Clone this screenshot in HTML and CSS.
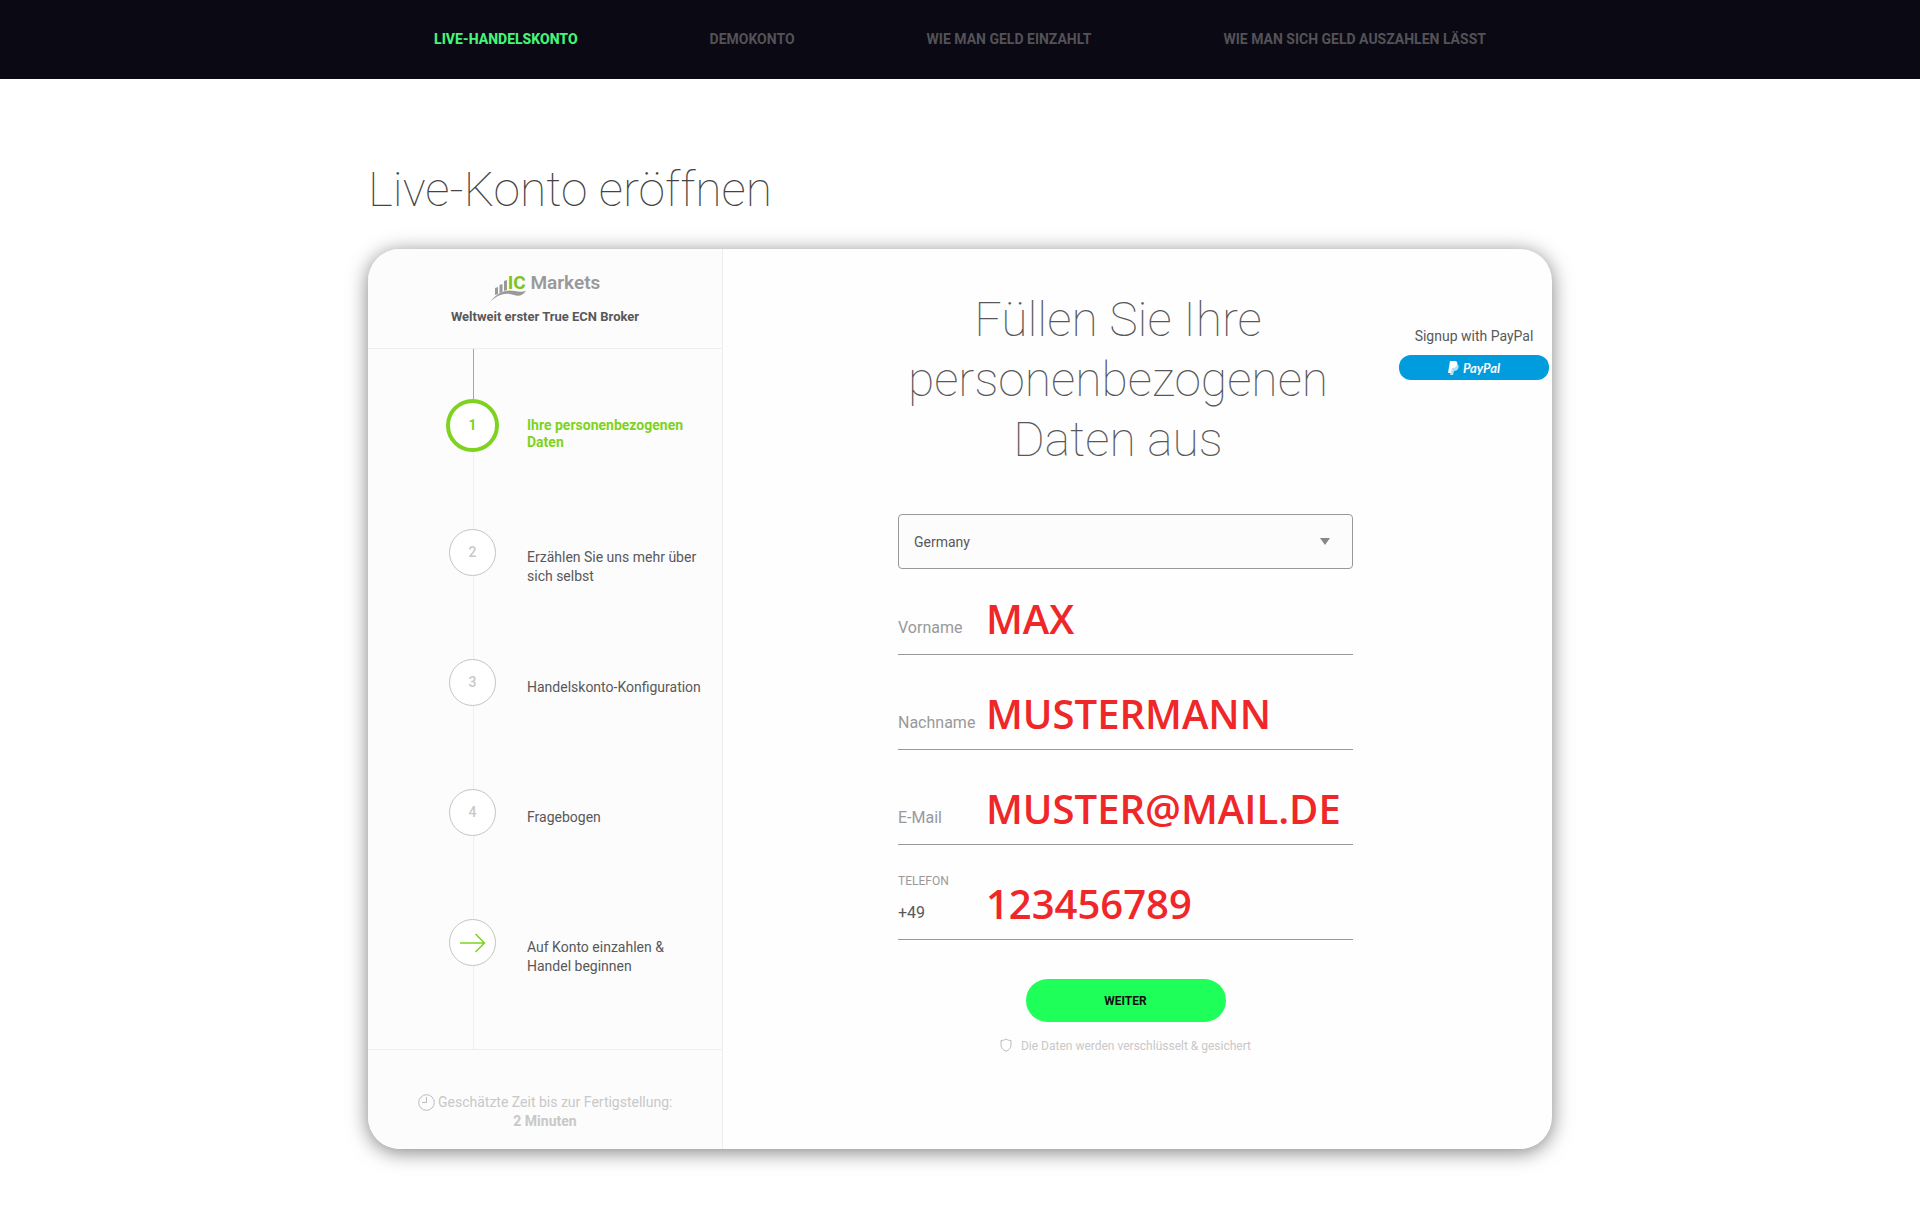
FILE: index.html
```html
<!DOCTYPE html>
<html lang="de">
<head>
    <meta charset="UTF-8">
    <meta name="viewport" content="width=device-width, initial-scale=1">
    <title>Live-Konto eröffnen</title>
    <link rel="stylesheet" href="styles.css">
</head>
<body>
    <nav class="top-nav">
        <a href="#" class="active">Live-Handelskonto</a>
        <a href="#">Demokonto</a>
        <a href="#">Wie man Geld einzahlt</a>
        <a href="#">Wie man sich Geld auszahlen lässt</a>
    </nav>

    <main class="page">
        <h1>Live-Konto eröffnen</h1>

        <div class="card">
            <aside class="sidebar">
                <div class="brand">
                    <div class="logo">
                        <svg class="logo-mark" width="38" height="30" viewBox="0 0 38 30" aria-hidden="true">
                            <path fill="#999" d="M5 15l3-1v7l-3 1zM9.500 12l3-1v8l-3 1zM14 8l3-1v10l-3 1z"/>
                            <path fill="#999" d="M0 29C7 19 17 16 25 18c4 1 7 1 11 0-3 4-7 6-12 4-8-3-16-1-24 7z"/>
                        </svg>
                        <span class="logo-text"><b>IC</b> Markets</span>
                    </div>
                    <p>Weltweit erster True ECN Broker</p>
                </div>

                <ol class="steps">
                    <li class="current"><span class="dot">1</span><span class="step-text">Ihre personenbezogenen Daten</span></li>
                    <li><span class="dot">2</span><span class="step-text">Erzählen Sie uns mehr über sich selbst</span></li>
                    <li><span class="dot">3</span><span class="step-text">Handelskonto-Konfiguration</span></li>
                    <li><span class="dot">4</span><span class="step-text">Fragebogen</span></li>
                    <li>
                        <span class="dot">
                            <svg width="26" height="20" viewBox="0 0 26 20" fill="none" stroke="#7ed321" stroke-width="1.5" aria-hidden="true">
                                <path d="M0 10h25M15.500 1l9 9-9 9"/>
                            </svg>
                        </span>
                        <span class="step-text">Auf Konto einzahlen &amp; Handel beginnen</span>
                    </li>
                </ol>

                <div class="estimate">
                    <svg width="17" height="17" viewBox="0 0 17 17" fill="none" stroke="#bbb" aria-hidden="true">
                        <circle cx="8.500" cy="8.500" r="7.800"/>
                        <path d="M8.500 3v5.500H4"/>
                    </svg>
                    Geschätzte Zeit bis zur Fertigstellung:<br>
                    <strong>2 Minuten</strong>
                </div>
            </aside>

            <section class="content">
                <form class="signup">
                    <h2>Füllen Sie Ihre personenbezogenen Daten aus</h2>

                    <div class="country">
                        <select aria-label="Land">
                            <option>Germany</option>
                        </select>
                    </div>

                    <div class="field">
                        <label for="vorname">Vorname</label>
                        <input type="text" id="vorname" value="MAX">
                    </div>
                    <div class="field">
                        <label for="nachname">Nachname</label>
                        <input type="text" id="nachname" value="MUSTERMANN">
                    </div>
                    <div class="field">
                        <label for="email">E-Mail</label>
                        <input type="text" id="email" value="MUSTER@MAIL.DE">
                    </div>
                    <div class="field">
                        <label for="telefon"><small>Telefon</small><span class="prefix">+49</span></label>
                        <input type="tel" id="telefon" value="123456789">
                    </div>

                    <button type="submit" class="btn-next">Weiter</button>

                    <p class="secure">
                        <svg width="12" height="14" viewBox="0 0 12 14" fill="none" stroke="#bbb" aria-hidden="true">
                            <path d="M6 1C4.500 2 3 2.500 1 2.500V7c0 3 2 5 5 6.300C9 12 11 10 11 7V2.500C9 2.500 7.500 2 6 1z"/>
                        </svg>
                        Die Daten werden verschlüsselt &amp; gesichert
                    </p>
                </form>

                <div class="paypal">
                    <span>Signup with PayPal</span>
                    <button type="button" class="btn-paypal">
                        <svg width="11" height="14" viewBox="0 0 11 14" aria-hidden="true">
                            <path fill="#fff" opacity=".7" d="M4 3h5c2 1 2 3 1 5-1 1-2 2-4 2l-1 4H2z"/>
                            <path fill="#fff" d="M2 0h5c2 0 3 2 2 4S7 7 5 7H4l-1 5H0z"/>
                        </svg>
                        PayPal
                    </button>
                </div>
            </section>
        </div>
    </main>
</body>
</html>
```
FILE: styles.css
```css
:root {
    --green: #7ed321;
    --neon: #1fff5a;
    --red: #ef2729;
    --dark: #0b0914;
    --text: #58585a;
    --muted: #999;
    --light: #c8c8c8;
    --line: #eee;
}

* {
    box-sizing: border-box;
}

body {
    margin: 0;
    background: #fff;
    color: var(--text);
    font-family: Roboto, "Liberation Sans", sans-serif;
    font-size: 14px;
    line-height: 19px;
}

/* Navigation */
.top-nav {
    display: flex;
    justify-content: center;
    align-items: center;
    flex-wrap: wrap;
    gap: 16px 132px;
    min-height: 79px;
    padding: 16px;
    background: var(--dark);
}

.top-nav a {
    color: #535257;
    font-weight: 700;
    text-transform: uppercase;
    text-decoration: none;
}

.top-nav a.active {
    color: #45f577;
    font-weight: 800;
}

.page {
    max-width: 1184px;
    margin: 0 auto;
    padding: 81px 0 64px;
}

h1,
h2 {
    margin: 0;
    font-size: 48px;
    line-height: 60px;
    font-weight: 100;
}

h1 {
    margin-bottom: 29px;
    color: #444;
}

.card {
    display: flex;
    border-radius: 32px;
    background: #fefefe;
    box-shadow: 0 3px 20px rgba(0, 0, 0, 0.5);
    overflow: hidden;
}

/* Sidebar */
.sidebar {
    flex: 0 0 355px;
    background: #fcfcfc;
    border-right: 1px solid var(--line);
}

.brand {
    height: 100px;
    padding-top: 24px;
    border-bottom: 1px solid var(--line);
    text-align: center;
}

.brand p {
    margin: 4px 0 0;
    font-size: 13px;
    line-height: 16px;
    font-weight: 700;
}

.logo {
    display: flex;
    justify-content: center;
    height: 32px;
}

.logo-mark {
    margin-right: -20px;
}

.logo-text {
    font-size: 19px;
    line-height: 20px;
    font-weight: 600;
    color: var(--muted);
}

.logo-text b {
    font-weight: 700;
    color: #7cc51b;
}

.steps {
    margin: 0;
    padding: 50px 0 0;
    list-style: none;
    background:
        linear-gradient(var(--green), var(--green)) 105px 0 / 1px 50px no-repeat,
        linear-gradient(var(--line), var(--line)) 105px 0 / 1px 100% no-repeat;
}

.steps li {
    display: grid;
    grid-template-columns: 53px 1fr;
    align-items: start;
    gap: 28px;
    min-height: 130px;
    padding: 0 12px 0 78px;
}

.dot {
    display: flex;
    align-items: center;
    justify-content: center;
    justify-self: center;
    width: 47px;
    height: 47px;
    border: 1px solid #c4c4c4;
    border-radius: 50%;
    background: #fff;
    color: var(--light);
    font-weight: 500;
}

.step-text {
    padding-top: 19px;
}

.current .dot {
    width: 53px;
    height: 53px;
    border: 4px solid var(--green);
    color: var(--green);
    font-weight: 700;
}

.current .step-text {
    padding-top: 18px;
    color: var(--green);
    font-weight: 700;
    line-height: 17px;
}

.estimate {
    height: 100px;
    padding-top: 43px;
    border-top: 1px solid var(--line);
    text-align: center;
    color: var(--light);
}

.estimate svg {
    vertical-align: -4px;
}

/* Form */
.content {
    flex: 1;
    display: flex;
    justify-content: space-between;
    min-width: 0;
    padding: 41px 3px 40px 175px;
}

.signup {
    flex: 0 1 455px;
    min-width: 0;
}

h2 {
    margin-bottom: 44px;
    padding-right: 15px;
    text-align: center;
}

.country {
    position: relative;
    margin-bottom: 17px;
}

.country::after {
    content: '';
    position: absolute;
    top: 24px;
    right: 23px;
    border: 5px solid transparent;
    border-top: 7px solid #888;
    border-bottom: 0;
    pointer-events: none;
}

.country select {
    display: block;
    width: 100%;
    height: 55px;
    padding: 1px 15px 0;
    border: 1px solid var(--muted);
    border-radius: 4px;
    background: #fcfcfc;
    color: var(--text);
    font: inherit;
    appearance: none;
}

.field {
    display: flex;
    align-items: flex-end;
    height: 69px;
    margin-bottom: 26px;
    border-bottom: 1px solid var(--muted);
}

.field label {
    flex: 0 0 88px;
    padding-bottom: 16px;
    color: var(--muted);
    font-size: 16px;
    line-height: 20px;
}

.field small {
    display: block;
    margin-bottom: 12px;
    font-size: 12px;
    text-transform: uppercase;
}

.prefix {
    color: var(--text);
}

.field input {
    flex: 1;
    width: 100%;
    min-width: 0;
    height: 48px;
    margin-bottom: 12px;
    padding: 0;
    border: 0;
    background: none;
    color: var(--red);
    font-family: "Open Sans", "Noto Sans", sans-serif;
    font-size: 40px;
    font-weight: 600;
}

.btn-next {
    display: block;
    width: 200px;
    height: 43px;
    margin: 39px auto 16px;
    border: 0;
    border-radius: 22px;
    background: var(--neon);
    color: #111;
    font: 700 12px Roboto, sans-serif;
    text-transform: uppercase;
}

.secure {
    display: flex;
    justify-content: center;
    gap: 9px;
    margin: 0;
    color: var(--light);
    font-size: 12px;
    line-height: 16px;
}

.paypal {
    display: flex;
    flex-direction: column;
    gap: 9px;
    flex: 0 0 150px;
    padding-top: 37px;
    text-align: center;
}

.btn-paypal {
    display: flex;
    align-items: center;
    justify-content: center;
    gap: 4px;
    height: 25px;
    border: 0;
    border-radius: 12px;
    background: #009cde;
    color: #fff;
    font: italic 700 13px Lato, sans-serif;
}

@media (max-width: 1184px) {
    .card,
    .content {
        flex-wrap: wrap;
    }

    .content {
        padding: 40px 24px;
    }

    .sidebar {
        flex: 1 0 355px;
    }
}
```
